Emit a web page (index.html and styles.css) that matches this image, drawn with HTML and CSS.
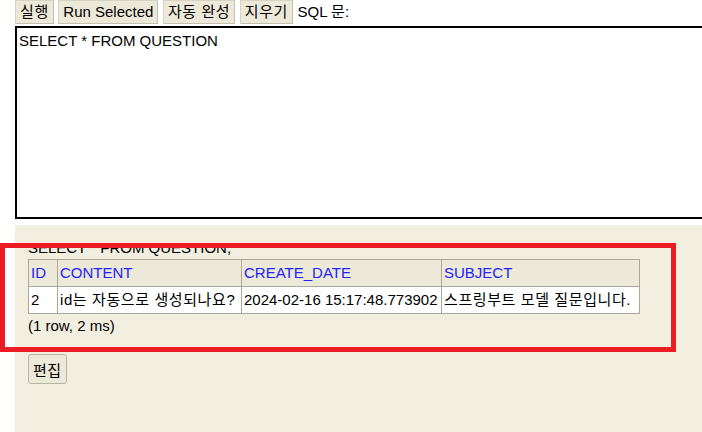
FILE: index.html
```html
<!DOCTYPE html>
<html lang="ko">
<head>
<meta charset="utf-8">
<title>H2 Console</title>
<link rel="stylesheet" href="styles.css">
</head>
<body>
<div class="toolbar">
  <button class="tbtn ko-btn">실행</button>
  <button class="tbtn">Run Selected</button>
  <button class="tbtn ko-btn">자동 완성</button>
  <button class="tbtn ko-btn">지우기</button>
  <span class="label">SQL 문:</span>
</div>
<div class="editor">SELECT * FROM QUESTION</div>
<div class="result">
  <div class="stmt">SELECT * FROM QUESTION;</div>
  <table class="grid">
    <thead>
      <tr>
        <th class="c-id">ID</th>
        <th class="c-content">CONTENT</th>
        <th class="c-date">CREATE_DATE</th>
        <th class="c-subject">SUBJECT</th>
      </tr>
    </thead>
    <tbody>
      <tr>
        <td>2</td>
        <td><span class="ko">id는 자동으로 생성되나요?</span></td>
        <td>2024-02-16 15:17:48.773902</td>
        <td><span class="ko">스프링부트 모델 질문입니다.</span></td>
      </tr>
    </tbody>
  </table>
  <div class="info">(1 row, 2 ms)</div>
  <button class="edit">편집</button>
</div>
<div class="highlight"></div>
</body>
</html>
```
FILE: styles.css
```css
html, body {
  margin: 0;
  padding: 0;
  background: #ffffff;
  font-family: "Liberation Sans", Arial, "Noto Sans CJK KR", sans-serif;
  font-size: 15px;
  color: #000;
  overflow: hidden;
  height: 432px;
}

.toolbar {
  display: flex;
  align-items: center;
  gap: 4.5px;
  padding-left: 15px;
  height: 24px;
}

.tbtn {
  height: 24px;
  padding: 0 4px;
  margin: 0;
  background: #ece9d8;
  border: 1px solid #d8d4c4;
  border-right-color: #c4c0b0;
  border-bottom-color: #c4c0b0;
  border-radius: 0;
  font-family: "Liberation Sans", Arial, "Noto Sans CJK KR", sans-serif;
  font-size: 15px;
  color: #000;
  line-height: 20px;
}

.ko-btn {
  letter-spacing: 0.6px;
  font-size: 15px;
}

.label {
  font-size: 15px;
  line-height: 24px;
}

.editor {
  margin: 2px 0 0 15px;
  width: 700px;
  border: 2px solid #000;
  padding: 4px 2px;
  box-sizing: border-box;
  height: 193px;
  line-height: 18px;
  white-space: pre;
  font-size: 15px;
}

.result {
  margin: 6px 0 0 15px;
  background: #f2efe0;
  padding: 14px 13px;
  height: 207px;
  box-sizing: border-box;
}

.stmt {
  line-height: 18px;
  margin-bottom: 2px;
}

.grid {
  border-collapse: collapse;
  table-layout: fixed;
  border: 1px solid #aca899;
}

.grid th,
.grid td {
  border: 1px solid #aca899;
  padding: 4px 2px;
  line-height: 18px;
  white-space: nowrap;
  text-align: left;
  font-weight: normal;
  overflow: hidden;
}

.grid th {
  background: #ece9d8;
  color: #2222ff;
}

.grid td {
  background: #ffffff;
}

.ko {
  letter-spacing: 0.6px;
}

.c-id { width: 24px; }
.c-content { width: 179px; }
.c-date { width: 195px; }
.c-subject { width: 193px; }

.info {
  margin-top: 3px;
  line-height: 18px;
}

.edit {
  display: block;
  margin-top: 19px;
  height: 30px;
  padding: 0 4px;
  background: #ece9d8;
  border: 1px solid #b8b4a4;
  border-radius: 3px;
  font-family: "Liberation Sans", Arial, "Noto Sans CJK KR", sans-serif;
  font-size: 15px;
  letter-spacing: 0.5px;
  color: #000;
}

.highlight {
  position: absolute;
  left: 0;
  top: 243px;
  width: 676px;
  height: 109px;
  box-sizing: border-box;
  border: 5px solid #ed1c24;
  pointer-events: none;
}
```
